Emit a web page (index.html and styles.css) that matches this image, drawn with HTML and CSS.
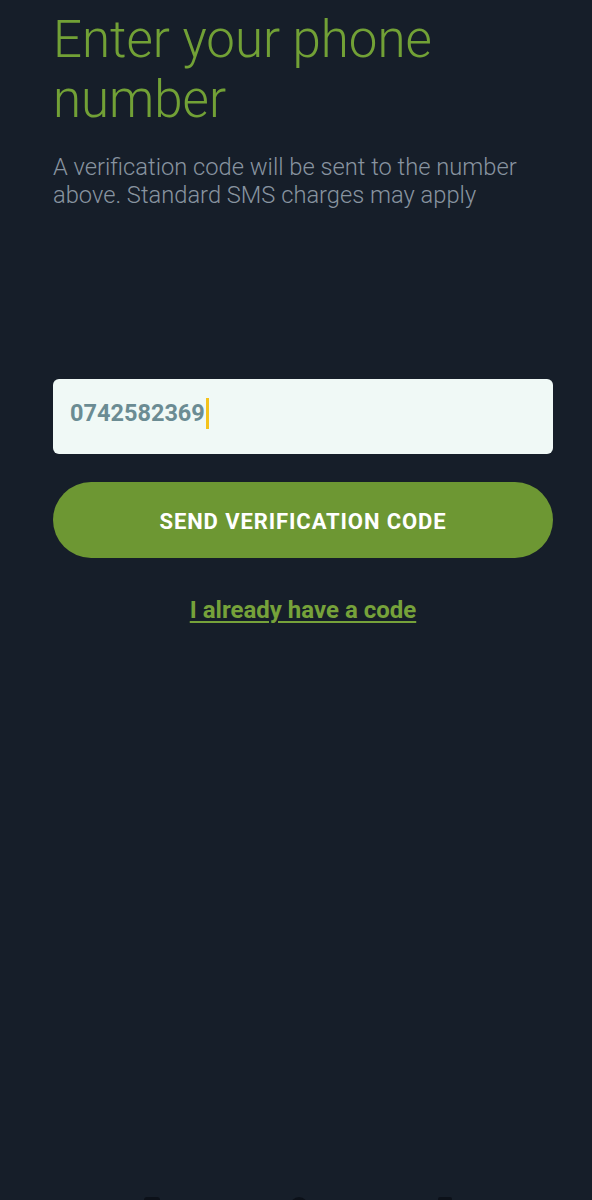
FILE: index.html
```html
<!DOCTYPE html>
<html lang="en">
<head>
<meta charset="utf-8">
<title>Enter your phone number</title>
<link rel="stylesheet" href="styles.css">
</head>
<body>
<div class="screen">
  <main class="content">
    <h1 class="title">Enter your phone number</h1>
    <p class="subtitle">A verification code will be sent to the number above. Standard SMS charges may apply</p>
    <div class="phone-field">
      <span class="phone-value">0742582369</span><span class="caret"></span>
    </div>
    <button class="send-btn" type="button">SEND VERIFICATION CODE</button>
    <a class="code-link" href="#">I already have a code</a>
  </main>
  <nav class="navbar">
    <span class="nav-icon nav-recent"></span>
    <span class="nav-icon nav-home"></span>
    <span class="nav-icon nav-back"></span>
  </nav>
</div>
</body>
</html>
```

FILE: styles.css
```css
html, body {
  margin: 0;
  padding: 0;
  background: #161e29;
}

.screen {
  width: 592px;
  height: 1200px;
  display: flex;
  flex-direction: column;
  overflow: hidden;
  font-family: Roboto, "Liberation Sans", sans-serif;
}

.content {
  flex: 1;
  display: flex;
  flex-direction: column;
  padding: 10px 39px 0 53px;
}

.title {
  margin: 0;
  font-size: 51px;
  line-height: 60px;
  font-weight: 300;
  color: #72a136;
}

.subtitle {
  margin: 23px 0 0;
  font-size: 23.7px;
  line-height: 28px;
  font-weight: 300;
  color: #8894a0;
}

.phone-field {
  margin-top: 170px;
  height: 75px;
  box-sizing: border-box;
  padding: 19px 17px 0;
  background: #f0f9f6;
  border-radius: 6px;
  display: flex;
  align-items: flex-start;
}

.phone-value {
  font-size: 23.5px;
  line-height: 30px;
  font-weight: 700;
  color: #6b8c93;
}

.caret {
  width: 3px;
  height: 31px;
  margin-left: 1px;
  background: #f4c31c;
}

.send-btn {
  margin-top: 28px;
  height: 76px;
  border: none;
  border-radius: 38px;
  background: #6d9733;
  color: #ffffff;
  font-family: Roboto, "Liberation Sans", sans-serif;
  font-size: 22px;
  font-weight: 700;
  letter-spacing: 0.9px;
  padding: 2px 0 0;
}

.code-link {
  align-self: center;
  margin-top: 38px;
  font-size: 24px;
  line-height: 28px;
  font-weight: 700;
  color: #76a23a;
  text-decoration: underline;
  text-decoration-thickness: 2px;
  text-underline-offset: 3px;
}

.navbar {
  height: 3px;
  display: flex;
  justify-content: space-between;
  padding: 0 140px 0 144px;
  overflow: hidden;
}

.nav-icon {
  display: block;
  width: 16px;
  height: 16px;
  background: #0c1119;
}

.nav-recent {
  border-radius: 3px;
}

.nav-home {
  border-radius: 50%;
  width: 18px;
  height: 18px;
}

.nav-back {
  width: 14px;
  border-radius: 2px;
}
```
